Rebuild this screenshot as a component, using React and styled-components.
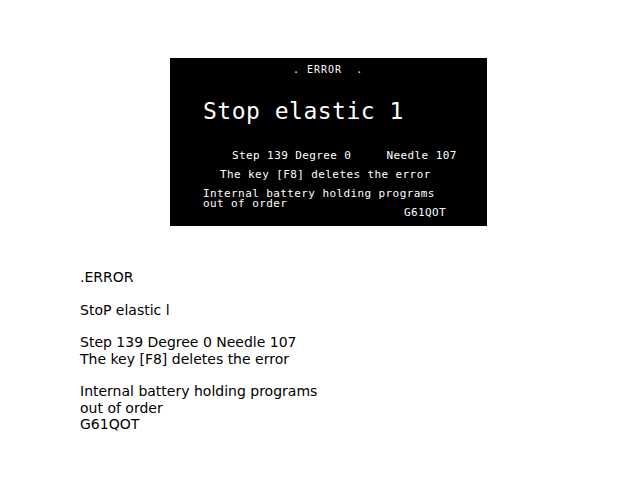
import React from 'react'
import styled, { createGlobalStyle } from 'styled-components'

const GlobalStyle = createGlobalStyle`
  body {
    margin: 8px;
    background: #fff;
    color: #000;
    font-family: 'DejaVu Sans', sans-serif;
  }
`

const Page = styled.div`
  display: flex;
  flex-direction: column;
  align-items: flex-start;
  padding: 50px 0 0 72px;
`

const Screen = styled.div`
  display: flex;
  flex-direction: column;
  width: 317px;
  height: 168px;
  margin-left: 90px;
  background: #000;
  color: #fff;
  font-family: 'DejaVu Sans Mono', monospace;
  overflow: hidden;
`

const Line = styled.div`
  font-size: ${(p) => p.$size || 11}px;
  line-height: ${(p) => p.$lh || p.$size || 11}px;
  letter-spacing: ${(p) => p.$ls ?? 0.4}px;
  margin-top: ${(p) => p.$mt || 0}px;
  padding-left: ${(p) => p.$indent || 0}px;
  white-space: pre;
`

const Caption = styled.div`
  margin-top: 43px;
  font-size: 14px;
  line-height: 16.35px;
  white-space: pre-line;
`

const screenLines = [
  { text: '. ERROR  .', size: 10, ls: 1, mt: 7, indent: 123 },
  { text: 'Stop elastic 1', size: 23, ls: 0.5, mt: 25, indent: 33 },
  { text: 'Step 139 Degree 0     Needle 107', mt: 27, indent: 62 },
  { text: 'The key [F8] deletes the error', mt: 8, indent: 50 },
  { text: 'Internal battery holding programs', lh: 10, mt: 9, indent: 33 },
  { text: 'out of order', lh: 10, indent: 33 },
  { text: 'G61QOT', lh: 10, mt: -1, indent: 234 },
]

const caption = `.ERROR

StoP elastic l

Step 139 Degree 0 Needle 107
The key [F8] deletes the error

Internal battery holding programs
out of order
G61QOT`

const App = () => {
  return (
    <Page>
      <GlobalStyle />
      <Screen>
        {screenLines.map((l, i) => (
          <Line
            key={i}
            $size={l.size}
            $lh={l.lh}
            $ls={l.ls}
            $mt={l.mt}
            $indent={l.indent}
          >
            {l.text}
          </Line>
        ))}
      </Screen>
      <Caption>{caption}</Caption>
    </Page>
  )
}

export default App
